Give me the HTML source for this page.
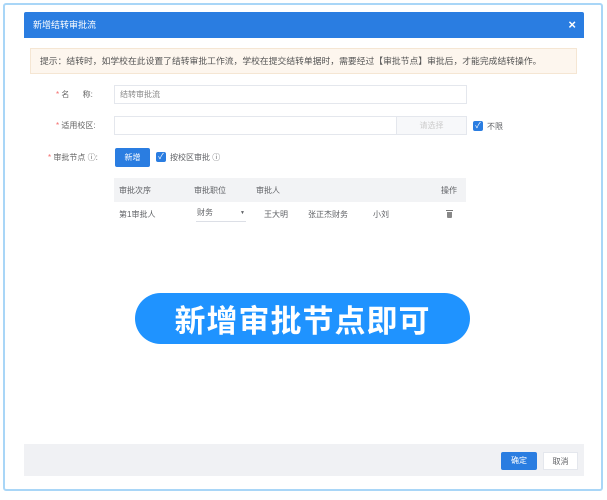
<!DOCTYPE html><html><head><meta charset="utf-8"><style>
*{margin:0;padding:0;box-sizing:border-box}
body{width:607px;height:500px;background:#fff;position:relative;font-family:"Liberation Sans","Noto Sans CJK SC",sans-serif;font-size:8px;color:#606266;overflow:hidden}
.a{position:absolute}
.frame{left:3px;top:3px;width:600px;height:488px;border:2px solid #a9d6f7;border-radius:3px}
.hd{left:24px;top:12px;width:560px;height:26px;background:#2a7de1;border-radius:2px 2px 0 0;color:#fff;font-size:9px;line-height:26px;padding-left:9px}
.x{right:8px;top:0;font-size:13px;font-weight:bold}
.tip{left:30px;top:48px;width:547px;height:26px;background:#fdf6ee;border:1px solid #f5e6d3;line-height:24px;padding-left:9px;font-size:8.8px;color:#555;white-space:nowrap}
.lbl{color:#666;font-size:8px}
.star{color:#f56c6c}
.inp{border:1px solid #e4e7ed;background:#fff;height:19px;line-height:17px;padding-left:5px;color:#888}
.cb{width:10px;height:10px;background:#2a7de1;border-radius:2px;color:#fff;font-size:8px;line-height:10px;text-align:center}
.btn{background:#2a7de1;color:#fff;border-radius:2px;text-align:center}
.th{left:114px;top:178px;width:352px;height:24px;background:#f2f3f5}
.footer{left:24px;top:444px;width:560px;height:32px;background:#f0f1f4}
.ban{left:135px;top:293px;width:335px;height:51px;border-radius:26px;background:#1f93ff;color:#fff;font-size:31px;font-weight:bold;text-align:center;line-height:51px;letter-spacing:1px;font-family:"Noto Sans CJK SC",sans-serif}
</style></head><body>
<div class="a frame"></div>
<div class="a hd">新增结转审批流<span class="a x">×</span></div>
<div class="a tip">提示：结转时，如学校在此设置了结转审批工作流，学校在提交结转单据时，需要经过【审批节点】审批后，才能完成结转操作。</div>
<div class="a lbl" style="left:56px;top:89px"><span class="star">*</span> 名&nbsp;&nbsp;&nbsp;&nbsp;&nbsp;&nbsp;称:</div>
<div class="a inp" style="left:114px;top:85px;width:353px">结转审批流</div>
<div class="a lbl" style="left:56px;top:120px"><span class="star">*</span> 适用校区:</div>
<div class="a inp" style="left:114px;top:116px;width:353px"></div>
<div class="a" style="left:396px;top:117px;width:70px;height:17px;background:#f7f8fa;border-left:1px solid #e4e7ed;color:#ccc;text-align:center;line-height:17px">请选择</div>
<div class="a cb" style="left:473px;top:121px">✓</div>
<div class="a" style="left:487px;top:121px">不限</div>
<div class="a lbl" style="left:48px;top:152px"><span class="star">*</span> 审批节点 ⓘ:</div>
<div class="a btn" style="left:115px;top:148px;width:35px;height:19px;line-height:19px">新增</div>
<div class="a cb" style="left:156px;top:152px">✓</div>
<div class="a" style="left:170px;top:152px">按校区审批 ⓘ</div>
<div class="a th"></div>
<div class="a" style="left:119px;top:185px">审批次序</div>
<div class="a" style="left:194px;top:185px">审批职位</div>
<div class="a" style="left:256px;top:185px">审批人</div>
<div class="a" style="left:441px;top:185px">操作</div>
<div class="a" style="left:119px;top:209px">第1审批人</div>
<div class="a" style="left:197px;top:207px">财务</div>
<div class="a" style="left:196px;top:221px;width:50px;border-top:1px solid #dcdfe6"></div>
<div class="a" style="left:240px;top:210px;font-size:5px">▼</div>
<div class="a" style="left:264px;top:209px">王大明</div>
<div class="a" style="left:308px;top:209px">张正杰财务</div>
<div class="a" style="left:373px;top:209px">小刘</div>
<div class="a" style="left:446px;top:210px;width:7px;height:1px;background:#777"></div>
<div class="a" style="left:447px;top:212px;width:5px;height:6px;background:#888;border-radius:0 0 1px 1px"></div>
<div class="a ban">新增审批节点即可</div>
<div class="a footer"></div>
<div class="a btn" style="left:501px;top:452px;width:36px;height:18px;line-height:18px">确定</div>
<div class="a" style="left:543px;top:452px;width:35px;height:18px;line-height:18px;background:#fff;border:1px solid #e4e7ed;text-align:center">取消</div>
</body></html>
